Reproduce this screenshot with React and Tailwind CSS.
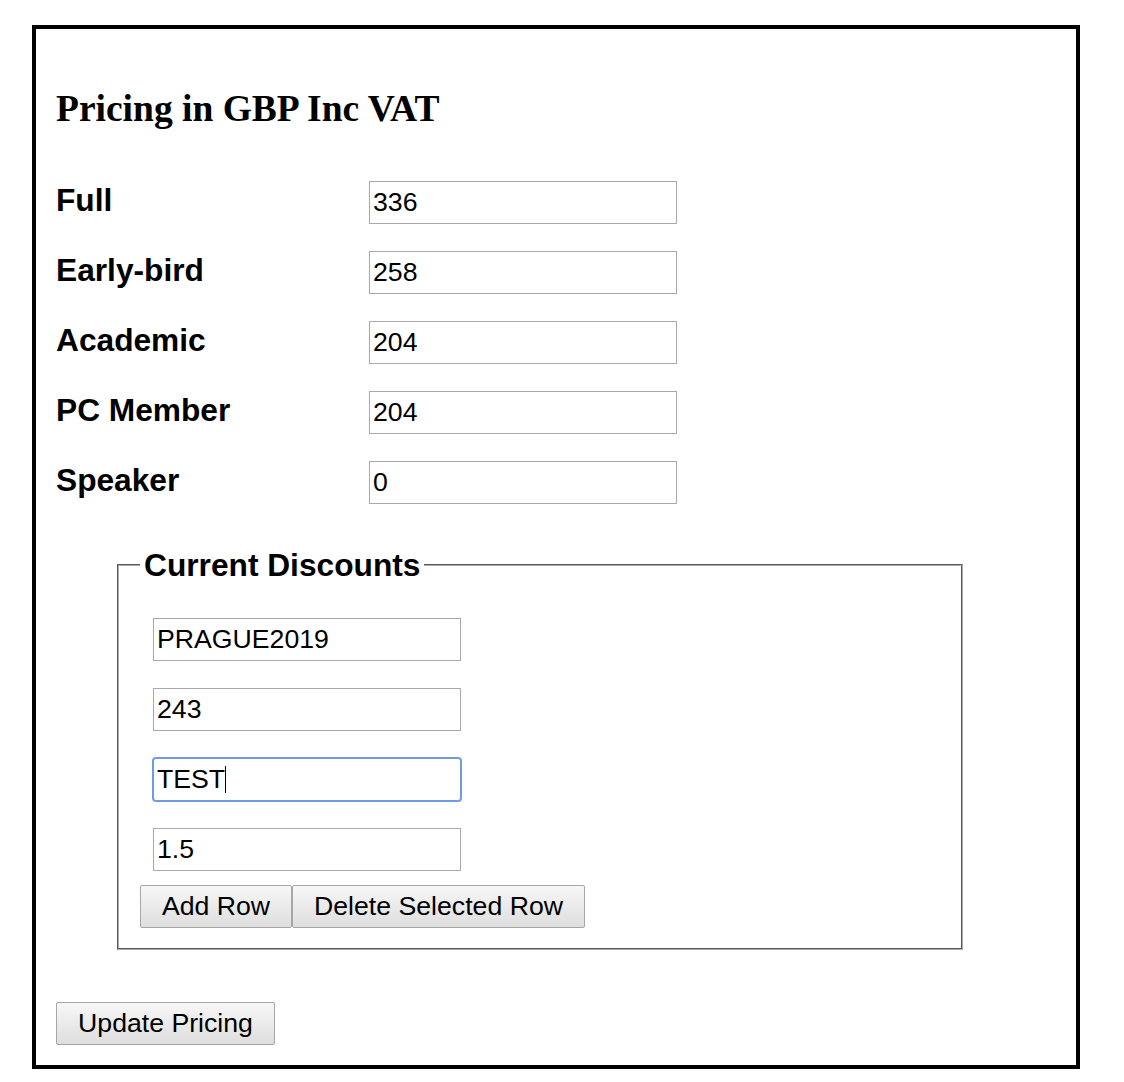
import { useState } from "react";

const prices = [
  { label: "Full", value: "336" },
  { label: "Early-bird", value: "258" },
  { label: "Academic", value: "204" },
  { label: "PC Member", value: "204" },
  { label: "Speaker", value: "0" },
];

const inputCls =
  "block w-[308px] h-[43px] border border-[#a9a9a9] bg-white pl-[3px] text-[26.67px] leading-[normal] text-black font-['Liberation_Sans',Arial,sans-serif] outline-none";

const btnCls =
  "h-[43px] border border-[#a6a6a6] rounded-[2px] bg-linear-to-b from-[#f7f7f7] to-[#dedede] text-[26.67px] leading-[normal] text-black text-center font-['Liberation_Sans',Arial,sans-serif]";

const PricingForm = () => {
  const [discounts, setDiscounts] = useState(["PRAGUE2019", "243", "TEST", "1.5"]);

  const update = (i, v) => {
    const next = [...discounts];
    next[i] = v;
    setDiscounts(next);
  };

  return (
    <div className="min-h-screen bg-white pl-[32px] pt-[25px] font-['Liberation_Sans',Arial,sans-serif] text-black">
      <div className="w-[1048px] border-4 border-black pl-[20px] pt-[61px] pb-[20px]">
        <h2 className="font-['Liberation_Serif','Times_New_Roman',serif] font-bold text-[37.5px] leading-none">
          Pricing in GBP Inc VAT
        </h2>

        {/* price rows */}
        <div className="mt-[53px] flex flex-col gap-[27px]">
          {prices.map((p) => (
            <div key={p.label} className="flex items-baseline">
              <label className="w-[313px] text-[31.7px] leading-none font-bold">{p.label}</label>
              <input type="text" defaultValue={p.value} className={inputCls} />
            </div>
          ))}
        </div>

        {/* discounts */}
        <fieldset className="mt-[43px] ml-[61px] w-[846px] border-2 border-[#acacac] [--tw-border-style:groove] pl-[21px] pt-[34px] pb-[20px]">
          <legend className="px-[4px] text-[31.7px] leading-[normal] font-bold">Current Discounts</legend>
          <div className="ml-[13px] flex flex-col gap-[27px]">
            {discounts.map((d, i) =>
              i === 2 ? (
                <div key={i} className="relative w-[308px]">
                  <input
                    type="text"
                    value={d}
                    onChange={(e) => update(i, e.target.value)}
                    className={inputCls + " border-[#6f9be0]! ring-1 ring-[#6f9be0] rounded-[3px]"}
                  />
                  <span className="absolute left-[72px] top-[8px] h-[27px] w-px bg-black" />
                </div>
              ) : (
                <input
                  key={i}
                  type="text"
                  value={d}
                  onChange={(e) => update(i, e.target.value)}
                  className={inputCls}
                />
              )
            )}
          </div>
          <div className="mt-[14px] flex">
            <button type="button" className={btnCls + " w-[152px]"}>
              Add Row
            </button>
            <button type="button" className={btnCls + " w-[293px]"}>
              Delete Selected Row
            </button>
          </div>
        </fieldset>

        <button type="button" className={btnCls + " mt-[52px] w-[219px]"}>
          Update Pricing
        </button>
      </div>
    </div>
  );
};

export default function App() {
  return <PricingForm />;
}
